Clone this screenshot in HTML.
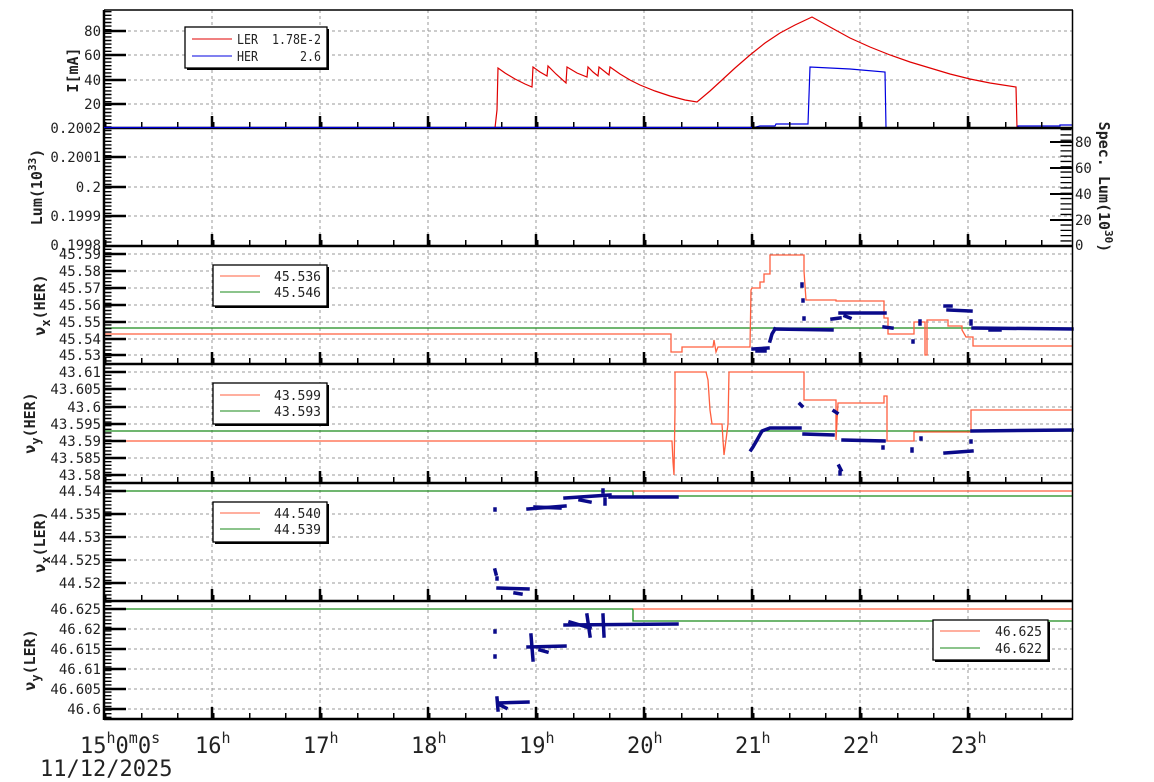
<!DOCTYPE html>
<html><head><meta charset="utf-8"><style>
html,body{margin:0;padding:0;background:#fff;width:1154px;height:782px;overflow:hidden}
svg{display:block}
text{font-family:"DejaVu Sans Mono","Liberation Mono",monospace;fill:#222;white-space:pre}
.yl{font-size:14px;text-anchor:end}
.tt{font-size:15px;font-weight:bold;text-anchor:middle}
.lg{font-size:13px}
.grid{stroke:#999;stroke-width:1;stroke-dasharray:3 3}
.r{fill:none;stroke:#ff5f3f;stroke-width:1.3}
.g{fill:none;stroke:#1a8a1a;stroke-width:1.3}
.n{fill:none;stroke:#0a0a8a;stroke-width:3.5;stroke-linejoin:miter;stroke-linecap:square}
.bx{fill:#fff;stroke:#000;stroke-width:1.3}
</style></head><body>
<svg width="1154" height="782" viewBox="0 0 1154 782" xmlns="http://www.w3.org/2000/svg" xml:space="preserve">
<g class="grid">
<line x1="212" y1="10" x2="212" y2="719"/><line x1="320" y1="10" x2="320" y2="719"/><line x1="428" y1="10" x2="428" y2="719"/><line x1="536" y1="10" x2="536" y2="719"/><line x1="644" y1="10" x2="644" y2="719"/><line x1="752" y1="10" x2="752" y2="719"/><line x1="860" y1="10" x2="860" y2="719"/><line x1="968" y1="10" x2="968" y2="719"/>
<line x1="104" y1="31" x2="1072" y2="31"/><line x1="104" y1="55" x2="1072" y2="55"/><line x1="104" y1="80" x2="1072" y2="80"/><line x1="104" y1="104" x2="1072" y2="104"/>
<line x1="104" y1="157" x2="1072" y2="157"/><line x1="104" y1="187" x2="1072" y2="187"/><line x1="104" y1="216" x2="1072" y2="216"/>
<line x1="104" y1="254" x2="1072" y2="254"/><line x1="104" y1="271" x2="1072" y2="271"/><line x1="104" y1="288" x2="1072" y2="288"/><line x1="104" y1="305" x2="1072" y2="305"/><line x1="104" y1="322" x2="1072" y2="322"/><line x1="104" y1="339" x2="1072" y2="339"/><line x1="104" y1="355" x2="1072" y2="355"/>
<line x1="104" y1="372" x2="1072" y2="372"/><line x1="104" y1="389" x2="1072" y2="389"/><line x1="104" y1="407" x2="1072" y2="407"/><line x1="104" y1="424" x2="1072" y2="424"/><line x1="104" y1="441" x2="1072" y2="441"/><line x1="104" y1="458" x2="1072" y2="458"/><line x1="104" y1="475" x2="1072" y2="475"/>
<line x1="104" y1="514" x2="1072" y2="514"/><line x1="104" y1="537" x2="1072" y2="537"/><line x1="104" y1="560" x2="1072" y2="560"/><line x1="104" y1="583" x2="1072" y2="583"/>
<line x1="104" y1="629" x2="1072" y2="629"/><line x1="104" y1="649" x2="1072" y2="649"/><line x1="104" y1="669" x2="1072" y2="669"/><line x1="104" y1="689" x2="1072" y2="689"/><line x1="104" y1="709" x2="1072" y2="709"/>
</g>

<polyline fill="none" stroke="#e00000" stroke-width="1.2" points="104,128 495,128 497,110 498,68 505,73 515,79 525,84 532,87 533,67 540,72 547,76 548,66 556,74 566,83 567,67 577,73 587,77 588,67 593,72 598,76 599,67 604,71 609,75 610,67 620,74 630,80 640,85 655,91 670,96 685,100 697,102 710,91 722,80 735,68 750,55 765,43 780,33 795,25 812,17 830,27 850,38 870,47 890,55 910,62 930,68 950,74 970,79 990,83 1016,87 1017,128 1072,128"/>
<polyline fill="none" stroke="#0000e0" stroke-width="1.2" points="104,128 752,128 760,126 775,126 776,124 808,124 810,67 850,69 885,72 886,128 1018,128 1018,126 1060,126 1060,125 1072,125"/>

<polyline class="g" points="104,328 1072,328"/>
<polyline class="r" points="104,334 671,334 671,352 682,352 682,347 713,347 714,340 716,352 718,347 750,347 751,290 752,288 760,288 760,282 764,282 764,274 770,274 770,255 804,255 804,271 806,300 836,300 836,301 884,301 884,318 888,318 888,334 914,334 914,322 925,322 925,355 927,355 927,320 948,320 948,326 962,326 962,330 966,337 973,337 973,346 1072,346"/>
<g class="n">
<polyline points="753,349 768,348"/><polyline points="757,351 765,351"/><polyline points="770,341 772,334 775,329"/>
<polyline points="775,329 832,330"/><line x1="802" y1="284" x2="802" y2="286"/><line x1="803" y1="300" x2="803" y2="301"/><line x1="804" y1="318" x2="804" y2="319"/>
<polyline points="832,319 840,318"/><polyline points="840,313 885,313"/><polyline points="845,316 850,318"/>
<polyline points="884,327 892,328"/><line x1="913" y1="341" x2="913" y2="342"/><line x1="920" y1="321" x2="920" y2="324"/>
<polyline points="945,306 951,306"/><polyline points="948,310 971,311"/><line x1="971" y1="321" x2="971" y2="324"/><polyline points="973,328 1072,329"/><polyline points="990,330 1000,330"/>
</g>

<polyline class="g" points="104,431 1072,431"/>
<polyline class="r" points="104,441 672,441 673,462 674,475 675,410 675,372 706,372 708,380 710,410 712,424 722,424 723,440 724,455 726,440 728,424 729,372 804,372 804,400 836,400 836,440 838,403 884,403 884,396 887,396 887,441 914,441 914,432 971,432 971,410 1072,410"/>
<g class="n">
<polyline points="751,450 753,447 757,440 762,431 770,428 800,428"/><polyline points="800,404 802,406"/>
<polyline points="804,434 833,435"/><polyline points="834,411 837,413"/><polyline points="839,466 841,470"/><line x1="840" y1="472" x2="840" y2="474"/>
<polyline points="843,440 884,441"/><line x1="883" y1="447" x2="883" y2="448"/><line x1="912" y1="449" x2="912" y2="451"/><line x1="921" y1="438" x2="921" y2="439"/>
<polyline points="945,453 972,451"/><line x1="971" y1="441" x2="971" y2="442"/><polyline points="972,431 1072,430"/>
</g>

<polyline class="g" points="104,491 633,491 633,496 1072,496"/>
<polyline class="r" points="633,491 1072,491"/>
<g class="n">
<line x1="495" y1="509" x2="495" y2="510"/><polyline points="495,570 496,574"/><line x1="497" y1="578" x2="497" y2="579"/>
<polyline points="498,588 528,589"/><polyline points="515,593 521,594"/>
<polyline points="528,509 565,506"/><polyline points="535,507 560,508"/>
<polyline points="565,498 610,495"/><polyline points="580,500 590,502"/><line x1="603" y1="490" x2="603" y2="492"/><line x1="605" y1="499" x2="605" y2="504"/>
<polyline points="610,497 677,497"/>
</g>

<polyline class="g" points="104,609 633,609 633,621 1072,621"/>
<polyline class="r" points="633,609 1072,609"/>
<g class="n">
<line x1="495" y1="631" x2="495" y2="632"/><line x1="495" y1="656" x2="495" y2="657"/>
<polyline points="497,698 498,710"/><polyline points="498,703 528,702"/><polyline points="500,705 506,708"/>
<polyline points="528,647 565,646"/><polyline points="531,635 533,660"/><polyline points="540,650 547,652"/>
<polyline points="565,625 677,624"/><polyline points="570,622 590,628"/><polyline points="587,615 590,636"/><polyline points="603,615 604,636"/>
</g>

<rect x="187" y="29" width="142" height="41" fill="#000"/>
<rect class="bx" x="185" y="27" width="142" height="41"/>
<line x1="192" y1="39" x2="232" y2="39" stroke="#e00000"/><line x1="192" y1="56" x2="232" y2="56" stroke="#0000e0"/>
<text class="lg" x="237" y="44" textLength="84" lengthAdjust="spacingAndGlyphs">LER  1.78E-2</text><text class="lg" x="237" y="61" textLength="84" lengthAdjust="spacingAndGlyphs">HER      2.6</text>

<rect x="215" y="267" width="114" height="41" fill="#000"/>
<rect class="bx" x="213" y="265" width="114" height="41"/>
<line x1="220" y1="276" x2="260" y2="276" stroke="#ff5f3f"/><line x1="220" y1="292" x2="260" y2="292" stroke="#1a8a1a"/>
<text class="lg" x="321" y="281" text-anchor="end">45.536</text><text class="lg" x="321" y="297" text-anchor="end">45.546</text>

<rect x="215" y="385" width="114" height="41" fill="#000"/>
<rect class="bx" x="213" y="383" width="114" height="41"/>
<line x1="220" y1="395" x2="260" y2="395" stroke="#ff5f3f"/><line x1="220" y1="411" x2="260" y2="411" stroke="#1a8a1a"/>
<text class="lg" x="321" y="400" text-anchor="end">43.599</text><text class="lg" x="321" y="416" text-anchor="end">43.593</text>

<rect x="215" y="504" width="114" height="40" fill="#000"/>
<rect class="bx" x="213" y="502" width="114" height="40"/>
<line x1="220" y1="513" x2="260" y2="513" stroke="#ff5f3f"/><line x1="220" y1="529" x2="260" y2="529" stroke="#1a8a1a"/>
<text class="lg" x="321" y="518" text-anchor="end">44.540</text><text class="lg" x="321" y="534" text-anchor="end">44.539</text>

<rect x="935" y="622" width="115" height="40" fill="#000"/>
<rect class="bx" x="933" y="620" width="115" height="40"/>
<line x1="940" y1="631" x2="980" y2="631" stroke="#ff5f3f"/><line x1="940" y1="648" x2="980" y2="648" stroke="#1a8a1a"/>
<text class="lg" x="1042" y="636" text-anchor="end">46.625</text><text class="lg" x="1042" y="653" text-anchor="end">46.622</text>

<g stroke="#000" fill="none">
<line x1="104" y1="10" x2="1073" y2="10" stroke-width="1.5"/>
<line x1="104" y1="128" x2="1072" y2="128" stroke-width="2.5"/>
<line x1="104" y1="246" x2="1072" y2="246" stroke-width="2.5"/>
<line x1="104" y1="364" x2="1072" y2="364" stroke-width="2.5"/>
<line x1="104" y1="483" x2="1072" y2="483" stroke-width="2.5"/>
<line x1="104" y1="601" x2="1072" y2="601" stroke-width="2.5"/>
<line x1="104" y1="719" x2="1072" y2="719" stroke-width="2.5"/>
<line x1="104" y1="10" x2="104" y2="720" stroke-width="2.5"/>
<line x1="1072.5" y1="10" x2="1072.5" y2="720" stroke-width="1.5"/>
<line x1="108" y1="11" x2="108" y2="718" stroke-width="7" stroke-dasharray="1.4 2.2"/>
<path stroke-width="2.5" d="M104 31h22M104 55h22M104 80h22M104 104h22M104 157h22M104 187h22M104 216h22M104 254h22M104 271h22M104 288h22M104 305h22M104 322h22M104 339h22M104 355h22M104 372h22M104 389h22M104 407h22M104 424h22M104 441h22M104 458h22M104 475h22M104 491h22M104 514h22M104 537h22M104 560h22M104 583h22M104 609h22M104 629h22M104 649h22M104 669h22M104 689h22M104 709h22"/>
<path stroke-width="2" d="M1072 142h-22M1072 168h-22M1072 194h-22M1072 220h-22"/>
<line x1="1066" y1="129" x2="1066" y2="245" stroke-width="11" stroke-dasharray="1.3 4"/>
<line x1="104" y1="125" x2="1072" y2="125" stroke-width="6" stroke-dasharray="1.5 34.5" stroke-dashoffset="-37"/>
<line x1="104" y1="243" x2="1072" y2="243" stroke-width="6" stroke-dasharray="1.5 34.5" stroke-dashoffset="-37"/>
<line x1="104" y1="361" x2="1072" y2="361" stroke-width="6" stroke-dasharray="1.5 34.5" stroke-dashoffset="-37"/>
<line x1="104" y1="480" x2="1072" y2="480" stroke-width="6" stroke-dasharray="1.5 34.5" stroke-dashoffset="-37"/>
<line x1="104" y1="598" x2="1072" y2="598" stroke-width="6" stroke-dasharray="1.5 34.5" stroke-dashoffset="-37"/>
<line x1="104" y1="716" x2="1072" y2="716" stroke-width="6" stroke-dasharray="1.5 34.5" stroke-dashoffset="-37"/>
<path stroke-width="2.5" d="M212 128v-12M320 128v-12M428 128v-12M536 128v-12M644 128v-12M752 128v-12M860 128v-12M968 128v-12
M212 246v-12M320 246v-12M428 246v-12M536 246v-12M644 246v-12M752 246v-12M860 246v-12M968 246v-12
M212 364v-12M320 364v-12M428 364v-12M536 364v-12M644 364v-12M752 364v-12M860 364v-12M968 364v-12
M212 483v-12M320 483v-12M428 483v-12M536 483v-12M644 483v-12M752 483v-12M860 483v-12M968 483v-12
M212 601v-12M320 601v-12M428 601v-12M536 601v-12M644 601v-12M752 601v-12M860 601v-12M968 601v-12
M212 719v-12M320 719v-12M428 719v-12M536 719v-12M644 719v-12M752 719v-12M860 719v-12M968 719v-12"/>
</g>
<line x1="104" y1="127.5" x2="752" y2="127.5" stroke="#0000e0" stroke-width="1.2"/>

<g class="yl">
<text x="101" y="36">80</text><text x="101" y="60">60</text><text x="101" y="85">40</text><text x="101" y="109">20</text>
<text x="101" y="133">0.2002</text><text x="101" y="162">0.2001</text><text x="101" y="192">0.2</text><text x="101" y="221">0.1999</text><text x="101" y="250">0.1998</text>
<text x="101" y="259">45.59</text><text x="101" y="276">45.58</text><text x="101" y="293">45.57</text><text x="101" y="310">45.56</text><text x="101" y="327">45.55</text><text x="101" y="344">45.54</text><text x="101" y="360">45.53</text>
<text x="101" y="377">43.61</text><text x="101" y="394">43.605</text><text x="101" y="412">43.6</text><text x="101" y="429">43.595</text><text x="101" y="446">43.59</text><text x="101" y="463">43.585</text><text x="101" y="480">43.58</text>
<text x="101" y="496">44.54</text><text x="101" y="519">44.535</text><text x="101" y="542">44.53</text><text x="101" y="565">44.525</text><text x="101" y="588">44.52</text>
<text x="101" y="614">46.625</text><text x="101" y="634">46.62</text><text x="101" y="654">46.615</text><text x="101" y="674">46.61</text><text x="101" y="694">46.605</text><text x="101" y="714">46.6</text>
</g>
<g style="font-size:14px">
<text x="1075" y="147">80</text><text x="1075" y="173">60</text><text x="1075" y="199">40</text><text x="1075" y="225">20</text><text x="1075" y="250">0</text>
</g>
<text class="tt" transform="translate(78,70) rotate(-90)">I[mA]</text>
<text class="tt" transform="translate(42,187) rotate(-90)">Lum(10<tspan dy="-6" font-size="11">33</tspan><tspan dy="6">)</tspan></text>
<text class="tt" transform="translate(45,305) rotate(-90)">ν<tspan dy="5" font-size="12">x</tspan><tspan dy="-5">(HER)</tspan></text>
<text class="tt" transform="translate(35,423) rotate(-90)">ν<tspan dy="5" font-size="12">y</tspan><tspan dy="-5">(HER)</tspan></text>
<text class="tt" transform="translate(45,542) rotate(-90)">ν<tspan dy="5" font-size="12">x</tspan><tspan dy="-5">(LER)</tspan></text>
<text class="tt" transform="translate(35,660) rotate(-90)">ν<tspan dy="5" font-size="12">y</tspan><tspan dy="-5">(LER)</tspan></text>
<text class="tt" transform="translate(1099,187) rotate(90)">Spec. Lum(10<tspan dy="-6" font-size="11">30</tspan><tspan dy="6">)</tspan></text>
<g style="font-size:22px">
<text x="80" y="753">15<tspan font-size="15" dy="-10">h</tspan><tspan dy="10">0</tspan><tspan font-size="15" dy="-10">m</tspan><tspan dy="10">0</tspan><tspan font-size="15" dy="-10">s</tspan></text>
<text x="195" y="753">16<tspan font-size="15" dy="-10">h</tspan></text>
<text x="303" y="753">17<tspan font-size="15" dy="-10">h</tspan></text>
<text x="411" y="753">18<tspan font-size="15" dy="-10">h</tspan></text>
<text x="519" y="753">19<tspan font-size="15" dy="-10">h</tspan></text>
<text x="627" y="753">20<tspan font-size="15" dy="-10">h</tspan></text>
<text x="735" y="753">21<tspan font-size="15" dy="-10">h</tspan></text>
<text x="843" y="753">22<tspan font-size="15" dy="-10">h</tspan></text>
<text x="951" y="753">23<tspan font-size="15" dy="-10">h</tspan></text>
<text x="40" y="776">11/12/2025</text>
</g>
</svg>
</body></html>
